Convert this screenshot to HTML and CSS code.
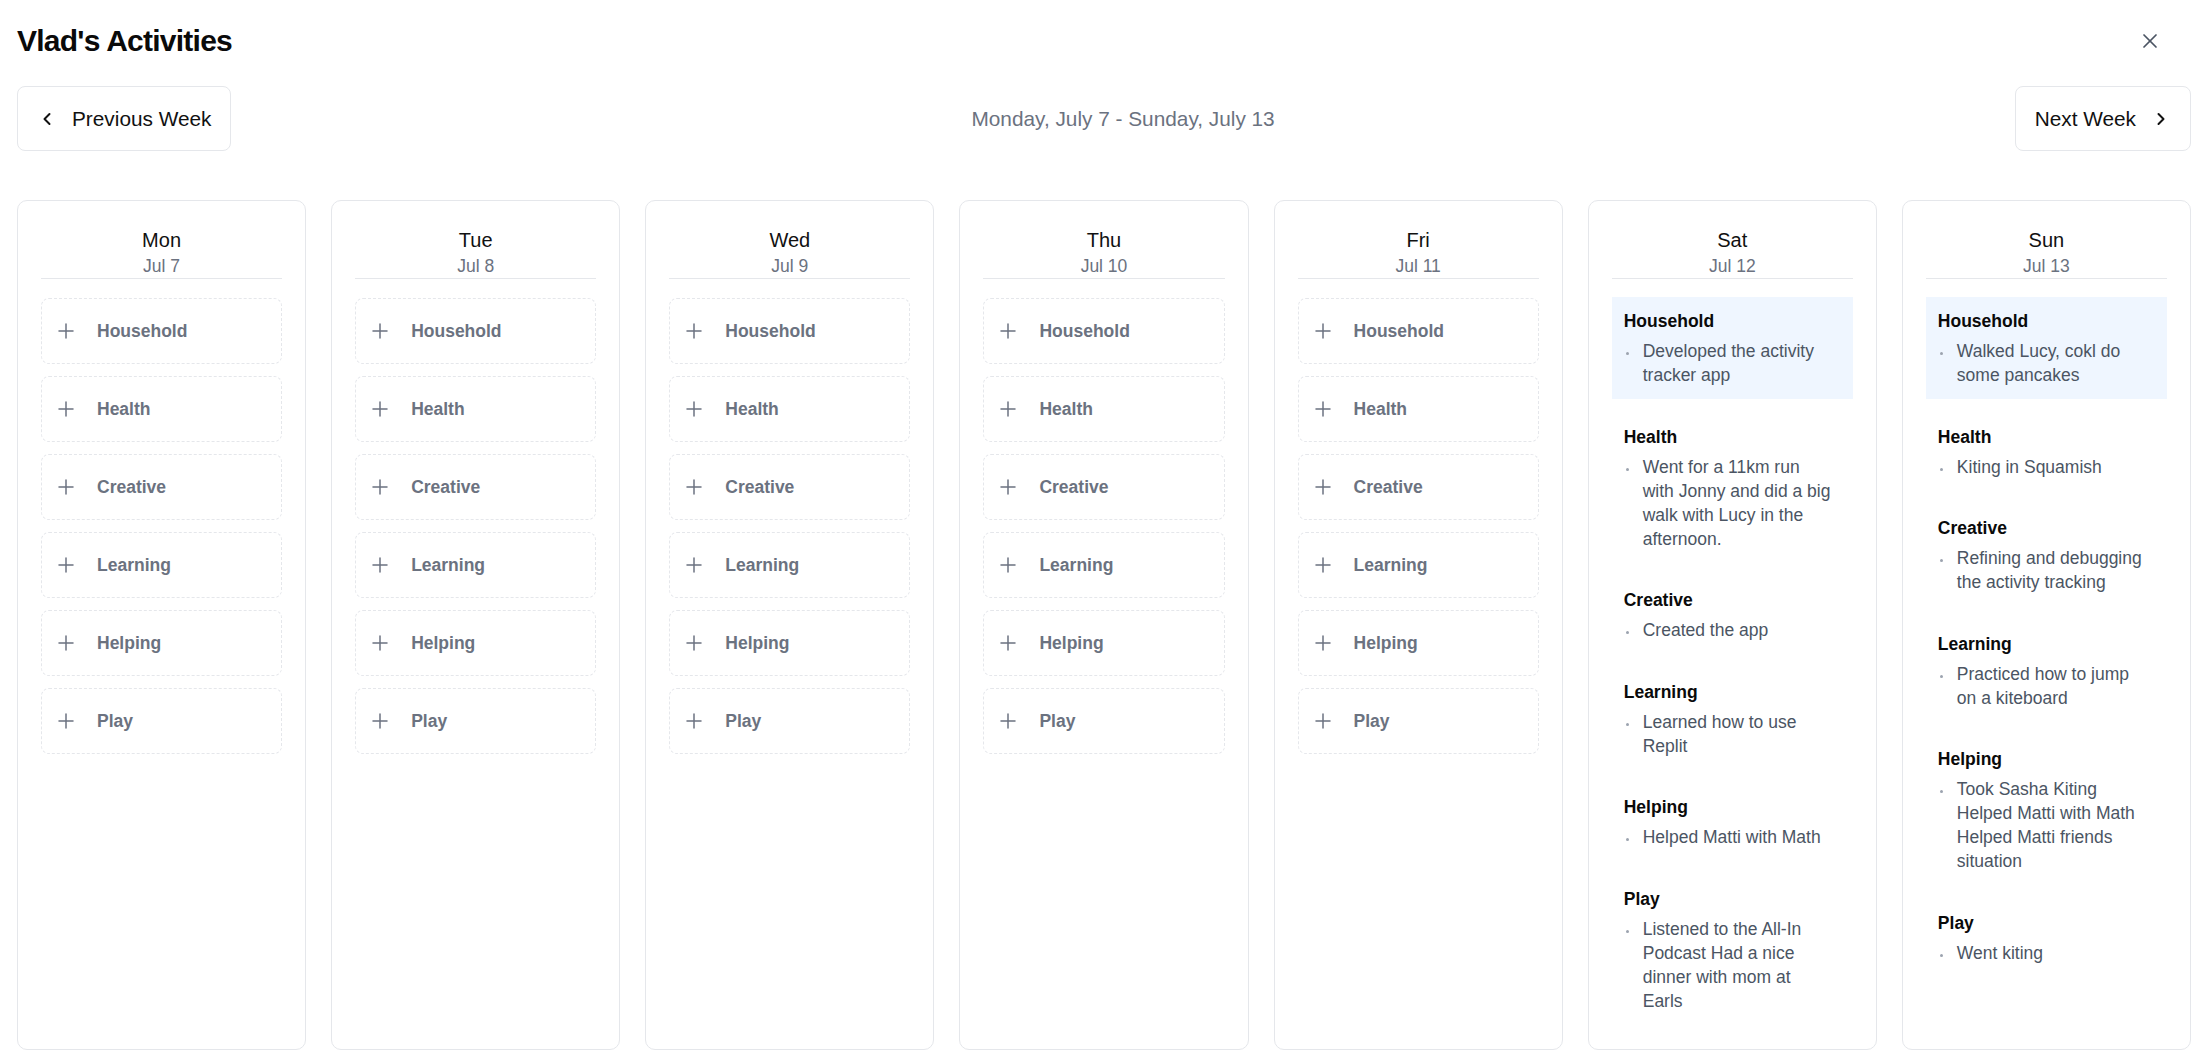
FILE: index.html
```html
<!DOCTYPE html>
<html lang="en">
<head>
<meta charset="utf-8">
<title>Vlad's Activities</title>
<link rel="stylesheet" href="styles.css">
</head>
<body>
<div class="page">
  <header class="title-row">
    <h1 class="title">Vlad's Activities</h1>
    <button class="close-btn" aria-label="Close">
      <svg width="24" height="24" viewBox="0 0 24 24" fill="none" stroke="currentColor" stroke-width="1.75" stroke-linecap="round" stroke-linejoin="round"><path d="M18 6 6 18"/><path d="m6 6 12 12"/></svg>
    </button>
  </header>

  <nav class="nav-row">
    <button class="nav-btn">
      <svg width="20" height="20" viewBox="0 0 24 24" fill="none" stroke="currentColor" stroke-width="2.4" stroke-linecap="round" stroke-linejoin="round"><path d="m15 18-6-6 6-6"/></svg>
      <span>Previous Week</span>
    </button>
    <div class="range">Monday, July 7 - Sunday, July 13</div>
    <button class="nav-btn">
      <span>Next Week</span>
      <svg width="20" height="20" viewBox="0 0 24 24" fill="none" stroke="currentColor" stroke-width="2.4" stroke-linecap="round" stroke-linejoin="round"><path d="m9 18 6-6-6-6"/></svg>
    </button>
  </nav>

  <main class="week">
    <section class="day">
      <div class="day-head"><div class="day-name">Mon</div><div class="day-date">Jul 7</div></div>
      <div class="cats">
        <div class="add"><svg class="plus" width="24" height="24" viewBox="0 0 24 24" fill="none" stroke="currentColor" stroke-width="1.5" stroke-linecap="round"><path d="M5 12h14"/><path d="M12 5v14"/></svg><span>Household</span></div>
        <div class="add"><svg class="plus" width="24" height="24" viewBox="0 0 24 24" fill="none" stroke="currentColor" stroke-width="1.5" stroke-linecap="round"><path d="M5 12h14"/><path d="M12 5v14"/></svg><span>Health</span></div>
        <div class="add"><svg class="plus" width="24" height="24" viewBox="0 0 24 24" fill="none" stroke="currentColor" stroke-width="1.5" stroke-linecap="round"><path d="M5 12h14"/><path d="M12 5v14"/></svg><span>Creative</span></div>
        <div class="add"><svg class="plus" width="24" height="24" viewBox="0 0 24 24" fill="none" stroke="currentColor" stroke-width="1.5" stroke-linecap="round"><path d="M5 12h14"/><path d="M12 5v14"/></svg><span>Learning</span></div>
        <div class="add"><svg class="plus" width="24" height="24" viewBox="0 0 24 24" fill="none" stroke="currentColor" stroke-width="1.5" stroke-linecap="round"><path d="M5 12h14"/><path d="M12 5v14"/></svg><span>Helping</span></div>
        <div class="add"><svg class="plus" width="24" height="24" viewBox="0 0 24 24" fill="none" stroke="currentColor" stroke-width="1.5" stroke-linecap="round"><path d="M5 12h14"/><path d="M12 5v14"/></svg><span>Play</span></div>
      </div>
    </section>

    <section class="day">
      <div class="day-head"><div class="day-name">Tue</div><div class="day-date">Jul 8</div></div>
      <div class="cats">
        <div class="add"><svg class="plus" width="24" height="24" viewBox="0 0 24 24" fill="none" stroke="currentColor" stroke-width="1.5" stroke-linecap="round"><path d="M5 12h14"/><path d="M12 5v14"/></svg><span>Household</span></div>
        <div class="add"><svg class="plus" width="24" height="24" viewBox="0 0 24 24" fill="none" stroke="currentColor" stroke-width="1.5" stroke-linecap="round"><path d="M5 12h14"/><path d="M12 5v14"/></svg><span>Health</span></div>
        <div class="add"><svg class="plus" width="24" height="24" viewBox="0 0 24 24" fill="none" stroke="currentColor" stroke-width="1.5" stroke-linecap="round"><path d="M5 12h14"/><path d="M12 5v14"/></svg><span>Creative</span></div>
        <div class="add"><svg class="plus" width="24" height="24" viewBox="0 0 24 24" fill="none" stroke="currentColor" stroke-width="1.5" stroke-linecap="round"><path d="M5 12h14"/><path d="M12 5v14"/></svg><span>Learning</span></div>
        <div class="add"><svg class="plus" width="24" height="24" viewBox="0 0 24 24" fill="none" stroke="currentColor" stroke-width="1.5" stroke-linecap="round"><path d="M5 12h14"/><path d="M12 5v14"/></svg><span>Helping</span></div>
        <div class="add"><svg class="plus" width="24" height="24" viewBox="0 0 24 24" fill="none" stroke="currentColor" stroke-width="1.5" stroke-linecap="round"><path d="M5 12h14"/><path d="M12 5v14"/></svg><span>Play</span></div>
      </div>
    </section>

    <section class="day">
      <div class="day-head"><div class="day-name">Wed</div><div class="day-date">Jul 9</div></div>
      <div class="cats">
        <div class="add"><svg class="plus" width="24" height="24" viewBox="0 0 24 24" fill="none" stroke="currentColor" stroke-width="1.5" stroke-linecap="round"><path d="M5 12h14"/><path d="M12 5v14"/></svg><span>Household</span></div>
        <div class="add"><svg class="plus" width="24" height="24" viewBox="0 0 24 24" fill="none" stroke="currentColor" stroke-width="1.5" stroke-linecap="round"><path d="M5 12h14"/><path d="M12 5v14"/></svg><span>Health</span></div>
        <div class="add"><svg class="plus" width="24" height="24" viewBox="0 0 24 24" fill="none" stroke="currentColor" stroke-width="1.5" stroke-linecap="round"><path d="M5 12h14"/><path d="M12 5v14"/></svg><span>Creative</span></div>
        <div class="add"><svg class="plus" width="24" height="24" viewBox="0 0 24 24" fill="none" stroke="currentColor" stroke-width="1.5" stroke-linecap="round"><path d="M5 12h14"/><path d="M12 5v14"/></svg><span>Learning</span></div>
        <div class="add"><svg class="plus" width="24" height="24" viewBox="0 0 24 24" fill="none" stroke="currentColor" stroke-width="1.5" stroke-linecap="round"><path d="M5 12h14"/><path d="M12 5v14"/></svg><span>Helping</span></div>
        <div class="add"><svg class="plus" width="24" height="24" viewBox="0 0 24 24" fill="none" stroke="currentColor" stroke-width="1.5" stroke-linecap="round"><path d="M5 12h14"/><path d="M12 5v14"/></svg><span>Play</span></div>
      </div>
    </section>

    <section class="day">
      <div class="day-head"><div class="day-name">Thu</div><div class="day-date">Jul 10</div></div>
      <div class="cats">
        <div class="add"><svg class="plus" width="24" height="24" viewBox="0 0 24 24" fill="none" stroke="currentColor" stroke-width="1.5" stroke-linecap="round"><path d="M5 12h14"/><path d="M12 5v14"/></svg><span>Household</span></div>
        <div class="add"><svg class="plus" width="24" height="24" viewBox="0 0 24 24" fill="none" stroke="currentColor" stroke-width="1.5" stroke-linecap="round"><path d="M5 12h14"/><path d="M12 5v14"/></svg><span>Health</span></div>
        <div class="add"><svg class="plus" width="24" height="24" viewBox="0 0 24 24" fill="none" stroke="currentColor" stroke-width="1.5" stroke-linecap="round"><path d="M5 12h14"/><path d="M12 5v14"/></svg><span>Creative</span></div>
        <div class="add"><svg class="plus" width="24" height="24" viewBox="0 0 24 24" fill="none" stroke="currentColor" stroke-width="1.5" stroke-linecap="round"><path d="M5 12h14"/><path d="M12 5v14"/></svg><span>Learning</span></div>
        <div class="add"><svg class="plus" width="24" height="24" viewBox="0 0 24 24" fill="none" stroke="currentColor" stroke-width="1.5" stroke-linecap="round"><path d="M5 12h14"/><path d="M12 5v14"/></svg><span>Helping</span></div>
        <div class="add"><svg class="plus" width="24" height="24" viewBox="0 0 24 24" fill="none" stroke="currentColor" stroke-width="1.5" stroke-linecap="round"><path d="M5 12h14"/><path d="M12 5v14"/></svg><span>Play</span></div>
      </div>
    </section>

    <section class="day">
      <div class="day-head"><div class="day-name">Fri</div><div class="day-date">Jul 11</div></div>
      <div class="cats">
        <div class="add"><svg class="plus" width="24" height="24" viewBox="0 0 24 24" fill="none" stroke="currentColor" stroke-width="1.5" stroke-linecap="round"><path d="M5 12h14"/><path d="M12 5v14"/></svg><span>Household</span></div>
        <div class="add"><svg class="plus" width="24" height="24" viewBox="0 0 24 24" fill="none" stroke="currentColor" stroke-width="1.5" stroke-linecap="round"><path d="M5 12h14"/><path d="M12 5v14"/></svg><span>Health</span></div>
        <div class="add"><svg class="plus" width="24" height="24" viewBox="0 0 24 24" fill="none" stroke="currentColor" stroke-width="1.5" stroke-linecap="round"><path d="M5 12h14"/><path d="M12 5v14"/></svg><span>Creative</span></div>
        <div class="add"><svg class="plus" width="24" height="24" viewBox="0 0 24 24" fill="none" stroke="currentColor" stroke-width="1.5" stroke-linecap="round"><path d="M5 12h14"/><path d="M12 5v14"/></svg><span>Learning</span></div>
        <div class="add"><svg class="plus" width="24" height="24" viewBox="0 0 24 24" fill="none" stroke="currentColor" stroke-width="1.5" stroke-linecap="round"><path d="M5 12h14"/><path d="M12 5v14"/></svg><span>Helping</span></div>
        <div class="add"><svg class="plus" width="24" height="24" viewBox="0 0 24 24" fill="none" stroke="currentColor" stroke-width="1.5" stroke-linecap="round"><path d="M5 12h14"/><path d="M12 5v14"/></svg><span>Play</span></div>
      </div>
    </section>

    <section class="day">
      <div class="day-head"><div class="day-name">Sat</div><div class="day-date">Jul 12</div></div>
      <div class="entries">
        <div class="entry highlight">
          <div class="entry-title">Household</div>
          <ul class="entry-list"><li><span class="dot"></span><span>Developed the activity tracker app</span></li></ul>
        </div>
        <div class="entry">
          <div class="entry-title">Health</div>
          <ul class="entry-list"><li><span class="dot"></span><span>Went for a 11km run with Jonny and did a big walk with Lucy in the afternoon.</span></li></ul>
        </div>
        <div class="entry">
          <div class="entry-title">Creative</div>
          <ul class="entry-list"><li><span class="dot"></span><span>Created the app</span></li></ul>
        </div>
        <div class="entry">
          <div class="entry-title">Learning</div>
          <ul class="entry-list"><li><span class="dot"></span><span>Learned how to use Replit</span></li></ul>
        </div>
        <div class="entry">
          <div class="entry-title">Helping</div>
          <ul class="entry-list"><li><span class="dot"></span><span>Helped Matti with Math</span></li></ul>
        </div>
        <div class="entry">
          <div class="entry-title">Play</div>
          <ul class="entry-list"><li><span class="dot"></span><span>Listened to the All-In Podcast Had a nice dinner with mom at Earls</span></li></ul>
        </div>
      </div>
    </section>

    <section class="day">
      <div class="day-head"><div class="day-name">Sun</div><div class="day-date">Jul 13</div></div>
      <div class="entries">
        <div class="entry highlight">
          <div class="entry-title">Household</div>
          <ul class="entry-list"><li><span class="dot"></span><span>Walked Lucy, cokl do some pancakes</span></li></ul>
        </div>
        <div class="entry">
          <div class="entry-title">Health</div>
          <ul class="entry-list"><li><span class="dot"></span><span>Kiting in Squamish</span></li></ul>
        </div>
        <div class="entry">
          <div class="entry-title">Creative</div>
          <ul class="entry-list"><li><span class="dot"></span><span>Refining and debugging the activity tracking</span></li></ul>
        </div>
        <div class="entry">
          <div class="entry-title">Learning</div>
          <ul class="entry-list"><li><span class="dot"></span><span>Practiced how to jump on a kiteboard</span></li></ul>
        </div>
        <div class="entry">
          <div class="entry-title">Helping</div>
          <ul class="entry-list"><li><span class="dot"></span><span>Took Sasha Kiting Helped Matti with Math Helped Matti friends situation</span></li></ul>
        </div>
        <div class="entry">
          <div class="entry-title">Play</div>
          <ul class="entry-list"><li><span class="dot"></span><span>Went kiting</span></li></ul>
        </div>
      </div>
    </section>
  </main>
</div>
</body>
</html>
```

FILE: styles.css
```css
* {
  box-sizing: border-box;
}

html, body {
  margin: 0;
  padding: 0;
  background: #ffffff;
}

body {
  font-family: "Liberation Sans", Arial, Helvetica, sans-serif;
  color: #111827;
}

.page {
  padding: 21px 14px 11px 17px;
}

.title-row {
  display: flex;
  align-items: center;
  justify-content: space-between;
  height: 40px;
}

.title {
  margin: 0;
  font-size: 30px;
  line-height: 36px;
  font-weight: 700;
  letter-spacing: -0.75px;
  color: #0a0a0a;
}

.close-btn {
  display: flex;
  align-items: center;
  justify-content: center;
  width: 40px;
  height: 40px;
  margin-right: 21px;
  padding: 0;
  border: 0;
  background: transparent;
  color: #4b5563;
}

.nav-row {
  display: flex;
  align-items: center;
  justify-content: space-between;
  margin-top: 25px;
}

.nav-btn {
  display: flex;
  align-items: center;
  gap: 15px;
  height: 65px;
  padding: 0 19px;
  border: 1px solid #e5e7eb;
  border-radius: 8px;
  background: #ffffff;
  font-family: inherit;
  font-size: 20.8px;
  line-height: 30px;
  color: #111111;
}

.nav-btn svg {
  flex: none;
  color: #111111;
}

.range {
  font-size: 20.8px;
  line-height: 30px;
  color: #6b7280;
}

.week {
  display: grid;
  grid-template-columns: repeat(7, minmax(0, 1fr));
  gap: 25px;
  margin-top: 49px;
}

.day {
  border: 1px solid #e5e7eb;
  border-radius: 10px;
  background: #ffffff;
  padding: 25px 23px 24px;
}

.day-head {
  text-align: center;
  border-bottom: 1px solid #e5e7eb;
  margin-bottom: 18px;
}

.day-name {
  font-size: 20px;
  line-height: 28px;
  color: #111111;
}

.day-date {
  font-size: 17.5px;
  line-height: 24px;
  color: #6b7280;
}

.cats {
  display: flex;
  flex-direction: column;
  gap: 12px;
  padding-top: 1px;
}

.add {
  display: flex;
  align-items: center;
  height: 66px;
  padding-left: 12px;
  border: 1px dashed #e5e7eb;
  border-radius: 8px;
  color: #6b7280;
  font-size: 17.5px;
  font-weight: 700;
}

.plus {
  flex: none;
  margin-right: 19px;
  color: #6b7280;
}

.entries {
  display: flex;
  flex-direction: column;
  gap: 13.5px;
}

.entry {
  padding: 12px 20px 12px 12px;
}

.entry.highlight {
  background: #eff6ff;
}

.entry-title {
  font-size: 17.5px;
  line-height: 25px;
  font-weight: 700;
  color: #0a0a0a;
}

.entry-list {
  list-style: none;
  margin: 5px 0 0;
  padding: 0;
}

.entry-list li {
  display: flex;
  align-items: flex-start;
  font-size: 17.5px;
  line-height: 24px;
  color: #4b5563;
}

.dot {
  flex: none;
  width: 3px;
  height: 3px;
  margin: 13px 14px 0 2px;
  border-radius: 50%;
  background: #9ca3af;
}
```
